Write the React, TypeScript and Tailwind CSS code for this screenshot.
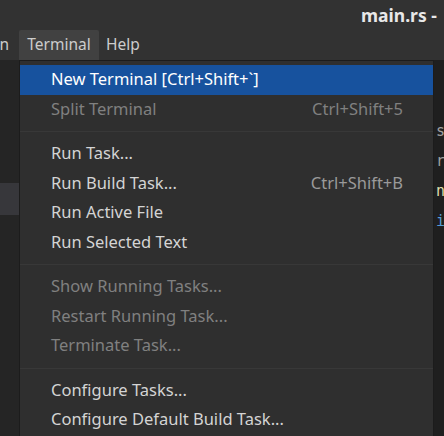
import React from "react";

type Item = { label: string; shortcut?: string; disabled?: boolean; active?: boolean } | "sep";

const items: Item[] = [
  { label: "New Terminal [Ctrl+Shift+`]", active: true },
  { label: "Split Terminal", shortcut: "Ctrl+Shift+5", disabled: true },
  "sep",
  { label: "Run Task..." },
  { label: "Run Build Task...", shortcut: "Ctrl+Shift+B" },
  { label: "Run Active File" },
  { label: "Run Selected Text" },
  "sep",
  { label: "Show Running Tasks...", disabled: true },
  { label: "Restart Running Task...", disabled: true },
  { label: "Terminate Task...", disabled: true },
  "sep",
  { label: "Configure Tasks..." },
  { label: "Configure Default Build Task..." },
];

export default function App() {
  return (
    <div className="w-[444px] h-[436px] overflow-hidden bg-[#1e1e1e] font-['Noto_Sans',sans-serif] flex flex-col">
      {/* Title bar */}
      <div className="h-[30px] shrink-0 bg-[#323232] flex items-center pl-[361px] whitespace-nowrap overflow-hidden">
        <span className="text-[17.5px] font-bold text-[#e8e8e8]">main.rs -</span>
      </div>

      {/* Menu bar */}
      <div className="h-[30px] shrink-0 bg-[#323232] flex items-stretch text-[15.5px] text-[#cccccc] whitespace-nowrap">
        <div className="w-[19px] flex items-center overflow-hidden justify-end pr-[10px]">
          <span>n</span>
        </div>
        <div className="w-[80px] flex items-center justify-center bg-[#414141] rounded-t-[2px]">Terminal</div>
        <div className="flex items-center pl-[7px]">Help</div>
      </div>

      {/* Body */}
      <div className="flex-1 flex min-h-0">
        {/* Sidebar */}
        <div className="w-[19px] shrink-0 bg-[#252525] flex flex-col">
          <div className="h-[123px]" />
          <div className="h-[32px] bg-[#37373b]" />
        </div>

        {/* Dropdown menu */}
        <div className="w-[415px] shrink-0 bg-[#2f2f2f] border-x border-t border-[#1c1c1c] pt-[4px] flex flex-col text-[16.5px]">
          {items.map((item, i) =>
            item === "sep" ? (
              <div key={i} className="my-[7px] h-px bg-[#383838]" />
            ) : (
              <div
                key={i}
                className={`h-[29.5px] shrink-0 flex items-center justify-between pl-[31px] pr-[30px] whitespace-nowrap ${
                  item.active ? "bg-[#17529e] text-[#ffffff]" : item.disabled ? "text-[#808080]" : "text-[#d4d4d4]"
                }`}
              >
                <span>{item.label}</span>
                {item.shortcut && (
                  <span className={item.disabled ? "text-[#808080]" : "text-[#9a9a9a]"}>{item.shortcut}</span>
                )}
              </div>
            )
          )}
        </div>

        {/* Editor peeking through */}
        <div className="flex-1 bg-[#1f1f1f] overflow-hidden pt-[56px] pl-[2px] font-['DejaVu_Sans_Mono',monospace] text-[15px] leading-[30px] whitespace-nowrap">
          <div className="text-[#a0a0a0]">s</div>
          <div className="text-[#a0a0a0]">r</div>
          <div className="text-[#dcdcaa]">n</div>
          <div className="text-[#569cd6]">i</div>
        </div>
      </div>
    </div>
  );
}
